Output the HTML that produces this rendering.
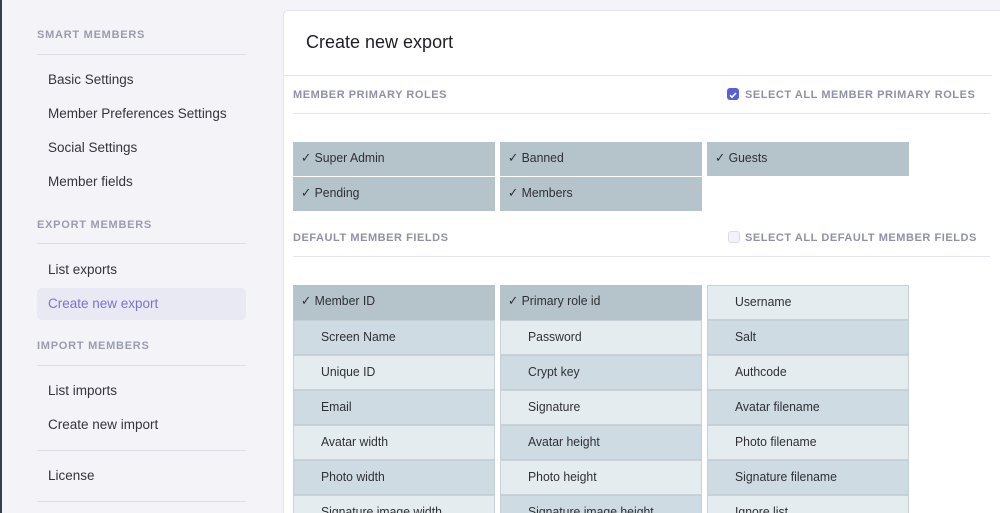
<!DOCTYPE html><html><head><style>
html,body{margin:0;width:1000px;height:513px;overflow:hidden}
body{background:#f4f4f8;font-family:"Liberation Sans",sans-serif;position:relative}
.lb{position:absolute;left:0;top:0;width:2px;height:513px;background:#3a3d4a}
.side{position:absolute;left:37px;top:0;width:209px}
.h{position:absolute;left:0;font-size:11px;font-weight:bold;letter-spacing:.75px;color:#9a9cad}
.ln{position:absolute;left:0;width:209px;height:1px;background:#dedfe6}
.it{position:absolute;left:11px;font-size:13.5px;color:#33343c}
.act{position:absolute;left:0;top:288px;width:209px;height:32px;background:#e9e9f3;border-radius:5px}
.card{position:absolute;left:283px;top:10px;width:720px;height:540px;background:#fff;border:1px solid #e3e4ea;border-radius:5px;box-sizing:border-box}
.title{position:absolute;left:306px;top:32px;font-size:18px;color:#1e1f26}
.sh{position:absolute;font-size:11px;font-weight:bold;letter-spacing:.55px;color:#8f92a6}
.hr{position:absolute;left:284px;width:708px;height:1px;background:#e4e5ea}
.cb{position:absolute;width:12px;height:12px;border-radius:3px}
.c{position:absolute;width:202px;height:34px;box-sizing:border-box;font-size:13px;line-height:32px;color:#2f3035;padding-left:27px}
.c span{display:inline-block;transform:scaleX(.94);transform-origin:0 50%}
.k{background:#b5c3cb;padding-left:8px}
.d{background:#cfdbe2;border:1px solid #c3ced5}
.l{background:#e5ecef;border:1px solid #c8d2d8}
</style></head><body>
<div class="lb"></div>
<div class="side">
<div class="h" style="top:29px">SMART MEMBERS</div><div class="ln" style="top:54px"></div>
<div class="it" style="top:72px">Basic Settings</div>
<div class="it" style="top:106px">Member Preferences Settings</div>
<div class="it" style="top:140px">Social Settings</div>
<div class="it" style="top:174px">Member fields</div>
<div class="h" style="top:219px">EXPORT MEMBERS</div><div class="ln" style="top:243px"></div>
<div class="it" style="top:262px">List exports</div>
<div class="act"></div>
<div class="it" style="top:296px;color:#7b72d6">Create new export</div>
<div class="h" style="top:340px">IMPORT MEMBERS</div><div class="ln" style="top:365px"></div>
<div class="it" style="top:383px">List imports</div>
<div class="it" style="top:417px">Create new import</div>
<div class="ln" style="top:450px"></div>
<div class="it" style="top:468px">License</div>
<div class="ln" style="top:501px"></div>
</div>
<div class="card"></div>
<div class="title">Create new export</div>
<div class="hr" style="top:75px"></div>
<div class="sh" style="left:293px;top:89px">MEMBER PRIMARY ROLES</div>
<div class="cb" style="left:727px;top:88px;background:#5b5fd6"><svg width="12" height="12"><path d="M3 6.2l2 2 4-4.2" stroke="#fff" stroke-width="1.6" fill="none"/></svg></div>
<div class="sh" style="left:745px;top:89px">SELECT ALL MEMBER PRIMARY ROLES</div>
<div class="hr" style="top:113px;left:293px;width:697px"></div>
<div class="sh" style="left:293px;top:232px">DEFAULT MEMBER FIELDS</div>
<div class="cb" style="left:728px;top:231px;background:#f3f3f7;border:1px solid #dcdce4;box-sizing:border-box"></div>
<div class="sh" style="left:745px;top:232px">SELECT ALL DEFAULT MEMBER FIELDS</div>
<div class="hr" style="top:256px;left:293px;width:697px"></div>
<div class="c k" style="left:293px;top:142px"><span>✓ Super Admin</span></div>
<div class="c k" style="left:500px;top:142px"><span>✓ Banned</span></div>
<div class="c k" style="left:707px;top:142px"><span>✓ Guests</span></div>
<div class="c k" style="left:293px;top:177px"><span>✓ Pending</span></div>
<div class="c k" style="left:500px;top:177px"><span>✓ Members</span></div>
<div class="c k" style="left:293px;top:285px;height:35px"><span>✓ Member ID</span></div>
<div class="c k" style="left:500px;top:285px;height:35px"><span>✓ Primary role id</span></div>
<div class="c l" style="left:707px;top:285px;height:35px"><span>Username</span></div>
<div class="c d" style="left:293px;top:320px;height:35px"><span>Screen Name</span></div>
<div class="c l" style="left:500px;top:320px;height:35px"><span>Password</span></div>
<div class="c d" style="left:707px;top:320px;height:35px"><span>Salt</span></div>
<div class="c l" style="left:293px;top:355px;height:35px"><span>Unique ID</span></div>
<div class="c d" style="left:500px;top:355px;height:35px"><span>Crypt key</span></div>
<div class="c l" style="left:707px;top:355px;height:35px"><span>Authcode</span></div>
<div class="c d" style="left:293px;top:390px;height:35px"><span>Email</span></div>
<div class="c l" style="left:500px;top:390px;height:35px"><span>Signature</span></div>
<div class="c d" style="left:707px;top:390px;height:35px"><span>Avatar filename</span></div>
<div class="c l" style="left:293px;top:425px;height:35px"><span>Avatar width</span></div>
<div class="c d" style="left:500px;top:425px;height:35px"><span>Avatar height</span></div>
<div class="c l" style="left:707px;top:425px;height:35px"><span>Photo filename</span></div>
<div class="c d" style="left:293px;top:460px;height:35px"><span>Photo width</span></div>
<div class="c l" style="left:500px;top:460px;height:35px"><span>Photo height</span></div>
<div class="c d" style="left:707px;top:460px;height:35px"><span>Signature filename</span></div>
<div class="c l" style="left:293px;top:495px;height:35px"><span>Signature image width</span></div>
<div class="c d" style="left:500px;top:495px;height:35px"><span>Signature image height</span></div>
<div class="c l" style="left:707px;top:495px;height:35px"><span>Ignore list</span></div>
</body></html>
